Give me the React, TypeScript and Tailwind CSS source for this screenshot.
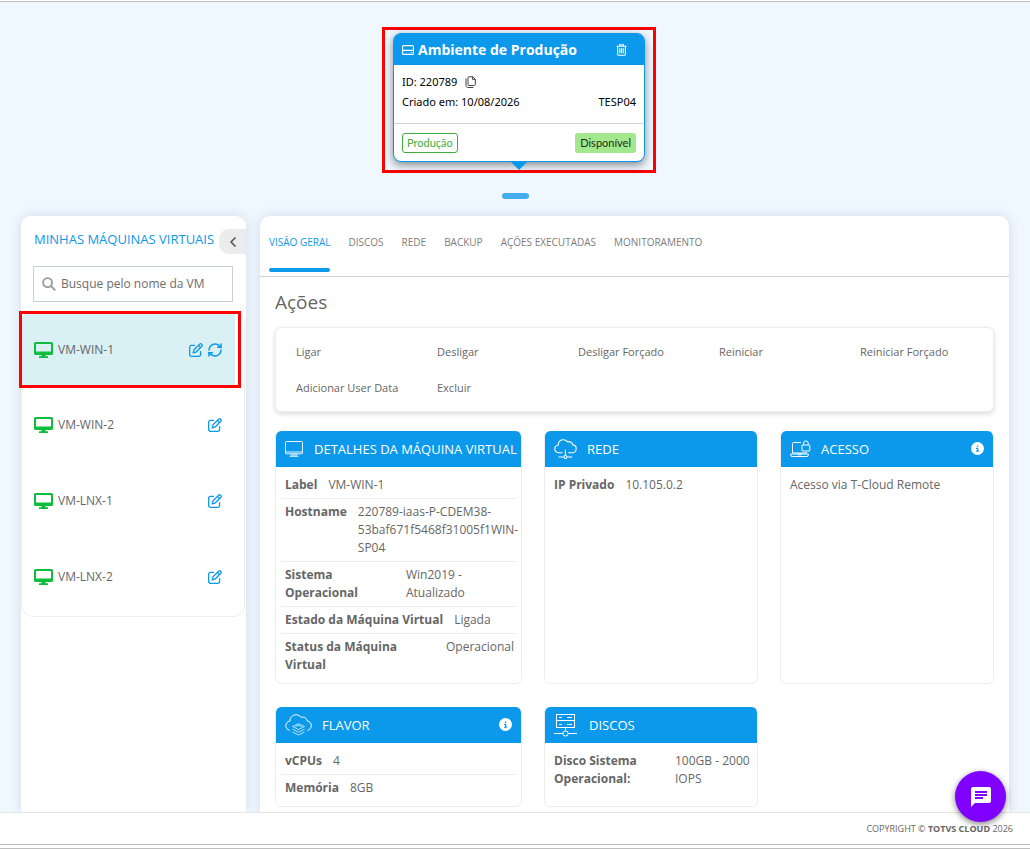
import React from "react";
import { FaCircleInfo, FaRegPenToSquare } from "react-icons/fa6";
import { MdChat } from "react-icons/md";
import { ChevronLeft, RefreshCw } from "lucide-react";

const HddIcon = () => (
  <svg viewBox="0 0 12 10" className="h-[10px] w-3" fill="none" stroke="currentColor" strokeWidth="1.1">
    <rect x="0.6" y="0.6" width="10.8" height="8.8" rx="1" />
    <path d="M0.6 5.4h10.8M8.6 7.5h1" />
  </svg>
);

const TrashIcon = () => (
  <svg viewBox="0 0 11 12" className="h-3 w-[11px]" fill="none" stroke="currentColor" strokeWidth="1.1">
    <path d="M0.5 2.3h10M3.6 2.2V0.8h3.8v1.4M1.6 2.4v7.8c0 .7.4 1.1 1.1 1.1h5.6c.7 0 1.1-.4 1.1-1.1V2.4M3.8 4.3v5M5.5 4.3v5M7.2 4.3v5" />
  </svg>
);

const CopyIcon = () => (
  <svg viewBox="0 0 11 12" className="h-3 w-[11px]" fill="none" stroke="currentColor" strokeWidth="1">
    <path d="M3.9.8h4L10.3 3.2v5.4c0 .6-.3.9-.9.9H3.9c-.6 0-.9-.3-.9-.9V1.7c0-.6.3-.9.9-.9zM7.6.9v2.5h2.6M1 2.4v7.1c0 1.2.8 2 2 2h5.4" />
  </svg>
);

const ScreenIcon = () => (
  <svg viewBox="0 0 19 16" className="h-4 w-[19px]" fill="#0fbd3c">
    <path fillRule="evenodd" d="M1.5 0h16A1.5 1.5 0 0 1 19 1.5v10a1.5 1.5 0 0 1-1.5 1.5h-6v1.2H14V16H5v-1.8h2.5V13h-6A1.5 1.5 0 0 1 0 11.500v-10A1.500 1.500 0 0 1 1.500 0zM2 2v7.500h15V2z" />
  </svg>
);

const MonitorIcon = () => (
  <svg viewBox="0 0 18 16" className="h-4 w-[18px]" fill="none" stroke="currentColor" strokeWidth="0.9">
    <rect x="0.5" y="0.5" width="17" height="12.300" rx="0.8" />
    <path d="M0.500 11h17M7 13l-1.200 1.800M11 13l1.200 1.800M4.600 15.300h8.800M7 14h4" />
  </svg>
);

const CloudNetIcon = () => (
  <svg viewBox="0 0 23 20" className="h-5 w-[23px]" fill="none" stroke="currentColor" strokeWidth="1.100">
    <path d="M8.500 13.800H5C2.300 13.800.8 12 .8 9.900c0-2 1.500-3.500 3.300-3.700C4.300 3 6.500.8 9.400.8c1.800 0 3.300.8 4.200 2.100 2.300-.8 4.800.7 5.200 3 2.100.2 3.400 1.800 3.400 3.800 0 2.300-1.700 4.100-4 4.100h-4" />
    <path d="M11.400 10.800v5.700M4.500 18h5M13.300 18h5" />
    <circle cx="11.400" cy="18" r="1.500" />
  </svg>
);

const LaptopLockIcon = () => (
  <svg viewBox="0 0 21 18" className="h-[18px] w-[21px]" fill="none" stroke="currentColor" strokeWidth="1">
    <path d="M11 2.500H3.500c-.6 0-1 .4-1 1V13h14v-1M.7 14h17.600v1.200c0 .8-.6 1.300-1.300 1.300H2c-.8 0-1.300-.5-1.300-1.300zM7.500 14.700h4" />
    <rect x="12" y="5" width="7.800" height="6" rx="0.500" />
    <path d="M13.600 5V3.200a2.300 2.300 0 0 1 4.600 0V5" />
  </svg>
);

const CloudLayersIcon = () => (
  <svg viewBox="0 0 27 22" className="h-[22px] w-[27px]" fill="none" stroke="currentColor" strokeWidth="1">
    <path d="M4.600 16.300C2.300 15.700.8 14 .8 11.700c0-2.400 1.700-4.300 4-4.500C5 3.500 7.600.8 11 .8c2.200 0 4 1 5.100 2.600 2.900-1 5.700.8 6.200 3.700 2.400.3 4 2.100 4 4.500s-1.500 4.200-3.800 4.700" />
    <path d="M7.500 12.500 13.500 9.800l6 2.700-6 3zM7.500 15.200l6 3 6-3M7.500 18l6 3 6-3M10.500 12.500l3-1.300 3 1.300" strokeWidth="0.700" />
  </svg>
);

const ServerIcon = () => (
  <svg viewBox="0 0 23 24" className="h-6 w-[23px]" fill="none" stroke="currentColor" strokeWidth="1">
    <rect x="2.500" y="1.500" width="18" height="6" />
    <rect x="2.500" y="7.500" width="18" height="7" />
    <path d="M5 4.500h3M13 4.500h5M5 11.500h3M13 11.500h5M11.500 15v2.500M0 20.500h8.800M14.200 20.500H23" />
    <circle cx="11.500" cy="20.500" r="2.600" />
  </svg>
);

type Info = { label: string; value: string; labelClass?: string };

function InfoCard({
  title,
  icon,
  titleGap = "gap-3",
  info = false,
  rows = [],
  className,
  children,
}: {
  title: string;
  icon: React.ReactNode;
  titleGap?: string;
  info?: boolean;
  rows?: Info[];
  className: string;
  children?: React.ReactNode;
}) {
  return (
    <section className={`rounded-md border border-[#ededed] bg-white ${className}`}>
      <header className="-mx-px -mt-px flex h-9 items-center justify-between rounded-t-md border-x border-[#ededed] bg-[#0c98eb] px-[9px] pb-px text-white">
        <div className={`flex items-center ${titleGap}`}>
          {icon}
          <h3 className="text-[13px] whitespace-nowrap">{title}</h3>
        </div>
        {info && (
          <button aria-label={`Informações sobre ${title}`}>
            <FaCircleInfo className="size-[13px]" />
          </button>
        )}
      </header>
      <div className="px-[5px] pt-[5px] pb-1">
        <dl className="divide-y divide-[#ededed]">
          {rows.map((r) => (
            <div key={r.label} className="flex gap-[11px] py-1 pl-1">
              <dt className={`font-bold ${r.labelClass ?? "shrink-0"}`}>{r.label}</dt>
              <dd>{r.value}</dd>
            </div>
          ))}
        </dl>
        {children}
      </div>
    </section>
  );
}

const vms = ["VM-WIN-1", "VM-WIN-2", "VM-LNX-1", "VM-LNX-2"];
const tabs = ["VISÃO GERAL", "DISCOS", "REDE", "BACKUP", "AÇÕES EXECUTADAS", "MONITORAMENTO"];
const actions = ["Ligar", "Desligar", "Desligar Forçado", "Reiniciar", "Reiniciar Forçado", "Adicionar User Data", "Excluir"];

export default function App() {
  return (
    <div className="flex min-h-screen flex-col bg-white pt-px font-['Open_Sans','Noto_Sans',sans-serif] text-xs leading-[18px] text-[#666]">
      <main className="flex flex-1 flex-col overflow-hidden border-t border-[#b9bfc6] bg-[#eff7ff] px-[21px]">
        <div className="mt-[25px] flex justify-center pl-2">
          <div className="w-[274px] border-3 border-[#ff0000] px-2 pt-[3px] pb-2">
            <article className="relative rounded-lg border border-[#0c98eb] bg-white text-[11px] text-black shadow-[0_3px_8px_rgba(0,0,0,0.45)]">
              <header className="flex h-[31px] items-center rounded-t-md bg-[#0c98eb] pr-[17px] pl-2 text-white">
                <HddIcon />
                <h1 className="ml-1 flex-1 text-sm font-bold">Ambiente de Produção</h1>
                <button aria-label="Excluir ambiente">
                  <TrashIcon />
                </button>
              </header>
              <div className="border-b border-[#d0d4d9] px-2 pt-[7px] pb-[11px] font-['Noto_Sans',sans-serif] leading-5">
                <div className="flex items-center gap-2">
                  ID: 220789
                  <button aria-label="Copiar ID" className="text-[#444]">
                    <CopyIcon />
                  </button>
                </div>
                <div className="flex justify-between">
                  <span>Criado em: 10/08/2026</span>
                  <span>TESP04</span>
                </div>
              </div>
              <div className="flex justify-between px-2 pt-[9px] pb-2 font-['Lato',sans-serif]">
                <span className="rounded-[3px] border border-[#3fae3f] px-1 text-[#3fae3f]">Produção</span>
                <span className="rounded-[3px] bg-[#a3e88c] px-[5px] py-px text-[#1f2d1f]">Disponível</span>
              </div>
              <svg viewBox="0 0 18 9" className="absolute top-full left-1/2 h-[9px] w-[18px] -translate-x-1/2" fill="#0c98eb">
                <path d="M0 0h18L9 9z" />
              </svg>
            </article>
          </div>
        </div>
        <button aria-label="Recolher ambiente" className="mx-auto mt-5 h-[6px] w-[27px] shrink-0 rounded-full bg-[#44adf0]" />

        <div className="mt-[17px] flex flex-1 gap-[14px]">
          <aside className="w-[225px] shrink-0 rounded-t-[10px] bg-white shadow-[0_0_12px_rgba(60,90,120,0.16)]">
            <div className="flex items-start justify-between pt-[13px] pl-[13px]">
              <h2 className="text-[13px] leading-5 whitespace-nowrap text-[#0c98eb]">MINHAS MÁQUINAS VIRTUAIS</h2>
              <button aria-label="Recolher lista" className="flex h-[25px] w-[27px] shrink-0 items-center justify-center rounded-l-[10px] bg-[#ececec] text-[#555]">
                <ChevronLeft className="size-4" strokeWidth={2.5} />
              </button>
            </div>
            <label className="mt-3 mr-[13px] ml-3 flex h-9 items-center gap-[5px] border border-[#c9ced6] px-2">
              <svg viewBox="0 0 14 14" className="size-[14px] shrink-0" fill="none" stroke="#999" strokeWidth="1.800">
                <circle cx="5.600" cy="5.600" r="4.500" />
                <path d="m9 9 4.300 4.300" />
              </svg>
              <input
                aria-label="Busque pelo nome da VM"
                placeholder="Busque pelo nome da VM"
                className="w-full min-w-0 bg-transparent text-xs outline-none placeholder:text-[#6c6c6c]"
              />
            </label>
            <ul className="mt-[9px] mr-px rounded-xl border border-[#ededed] pb-px">
              {vms.map((vm, i) => (
                <li
                  key={vm}
                  className={`relative flex items-center pl-3 ${i === 0 ? "mr-[9px] h-[75px] rounded-tl-lg bg-[#d9f0f4] pr-3" : "h-[76px] pr-[22px]"}`}
                >
                  <ScreenIcon />
                  <span className="ml-[5px] flex-1">{vm}</span>
                  <span className="flex items-center gap-1 text-[#0c98eb]">
                    <button aria-label={`Editar ${vm}`}>
                      <FaRegPenToSquare className="size-[14px]" />
                    </button>
                    {i === 0 && (
                      <button aria-label={`Atualizar ${vm}`}>
                        <RefreshCw className="size-4" strokeWidth={2.3} />
                      </button>
                    )}
                  </span>
                  {i === 0 && <span className="pointer-events-none absolute -top-px -right-[6px] -bottom-px -left-[3px] border-3 border-[#ff0000]" />}
                </li>
              ))}
            </ul>
          </aside>

          <section className="min-w-0 flex-1 rounded-t-[10px] bg-white shadow-[0_0_12px_rgba(60,90,120,0.16)]">
            <nav className="flex h-[61px] gap-[18px] border-b border-[#cfd3cf] px-[9px] text-[10px]">
              {tabs.map((t, i) => (
                <button
                  key={t}
                  className={`relative h-[56px] pb-1 whitespace-nowrap ${i === 0 ? "text-[#0c98eb]" : "text-[#7d7d7d]"}`}
                >
                  {t}
                  {i === 0 && <span className="absolute inset-x-0 bottom-0 h-1 rounded-full bg-[#0c98eb]" />}
                </button>
              ))}
            </nav>
            <div className="px-[15px] pt-[11px] pb-[5px]">
              <h2 className="text-[19px] leading-7">Ações</h2>
              <div className="mt-[11px] grid grid-cols-5 gap-y-[18px] rounded-md border border-[#ededed] bg-white px-[6px] pt-[15px] pb-[14px] text-[11px] shadow-[0_2px_5px_rgba(0,0,0,0.14)]">
                {actions.map((a) => (
                  <button key={a} className="pl-[14px] text-left">
                    {a}
                  </button>
                ))}
              </div>
              <div className="mt-[19px] grid grid-cols-[minmax(0,247fr)_minmax(0,214fr)_minmax(0,214fr)] gap-x-[22px] gap-y-[23px]">
                <InfoCard
                  title="DETALHES DA MÁQUINA VIRTUAL"
                  icon={<MonitorIcon />}
                  className="min-h-[253px]"
                  titleGap="gap-[11px]"
                  rows={[
                    { label: "Label", value: "VM-WIN-1" },
                    { label: "Hostname", value: "220789-iaas-P-CDEM38-53baf671f5468f31005f1WIN-SP04" },
                    { label: "Sistema Operacional", value: "Win2019 - Atualizado", labelClass: "w-[110px] shrink-0" },
                    { label: "Estado da Máquina Virtual", value: "Ligada" },
                    { label: "Status da Máquina Virtual", value: "Operacional", labelClass: "w-[150px] pr-6" },
                  ]}
                />
                <InfoCard title="REDE" icon={<CloudNetIcon />} titleGap="gap-[10px]" className="min-h-[253px]" rows={[{ label: "IP Privado", value: "10.105.0.2" }]} />
                <InfoCard title="ACESSO" icon={<LaptopLockIcon />} titleGap="gap-[10px]" info className="min-h-[253px]">
                  <p className="px-1 py-1">Acesso via T-Cloud Remote</p>
                </InfoCard>
                <InfoCard
                  title="FLAVOR"
                  icon={<CloudLayersIcon />}
                  info
                  titleGap="gap-[10px]"
                  className="min-h-[100px]"
                  rows={[
                    { label: "vCPUs", value: "4" },
                    { label: "Memória", value: "8GB" },
                  ]}
                />
                <InfoCard
                  title="DISCOS"
                  icon={<ServerIcon />}
                  className="min-h-[100px]"
                  rows={[{ label: "Disco Sistema Operacional:", value: "100GB - 2000 IOPS", labelClass: "w-[110px] shrink-0" }]}
                />
              </div>
            </div>
          </section>
        </div>
      </main>
      <footer className="border-t border-[#e6e6e6] bg-white">
        <p className="px-[17px] pt-[7px] pb-[6px] text-right text-[9px]">
          COPYRIGHT © <b>TOTVS CLOUD</b> 2026
        </p>
        <div className="h-[5px] border-y border-[#bdbdbd]" />
      </footer>
      <button
        aria-label="Abrir chat"
        className="fixed right-6 bottom-[27px] flex size-[51px] items-center justify-center rounded-full bg-[#8000ff] text-white shadow-[0_2px_6px_rgba(0,0,0,0.5)]"
      >
        <MdChat className="size-6" />
      </button>
    </div>
  );
}
